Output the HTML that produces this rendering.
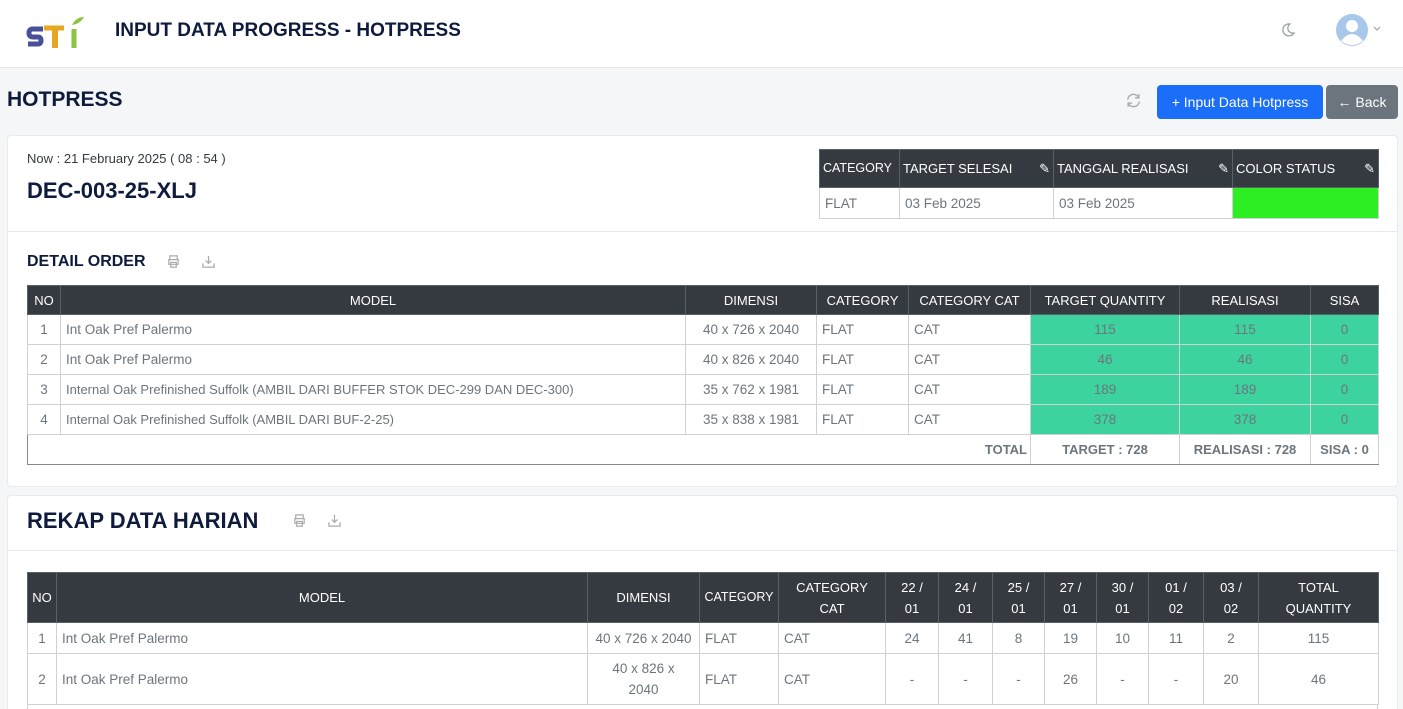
<!DOCTYPE html>
<html style="width:1403px;height:709px;overflow:hidden"><head><meta charset="utf-8">
<style>
*{box-sizing:border-box;margin:0;padding:0}
body{width:1403px;height:709px;overflow:hidden;background:#f5f6f8;font-family:"Liberation Sans",sans-serif;color:#6c757d;position:relative}
.abs{position:absolute}
.hdr{left:0;top:0;width:1403px;height:68px;background:#fff;border-bottom:1px solid #e3e5e8}
.navy{color:#0e1b3d;font-weight:bold}
.card{background:#fff;border:1px solid #e8eaed;border-radius:4px}
table{border-collapse:collapse;table-layout:fixed;position:absolute;font-size:13.5px}
th{background:#343a40;color:#fff;font-weight:normal;border:1px solid #5a6068;text-align:center;padding:0 3px;line-height:21px;font-size:13px;overflow:hidden;white-space:nowrap}
td{border:1px solid #cfd2d5;padding:0 5px;white-space:nowrap;overflow:hidden}
.c{text-align:center}
.g{background:#3dd39f}
.btn{border-radius:4px;color:#fff;font-size:14px;text-align:center;line-height:34px}
</style></head><body>
<div class="abs hdr"></div>
<svg class="abs" style="left:26px;top:14px" width="60" height="36" viewBox="0 0 60 36">
<path d="M17 15 H7 Q3 15 3 19 Q3 23 7 23 H12 Q15 23 15 26.5 Q15 30 12 30 H2" fill="none" stroke="#4a4f9a" stroke-width="5"/>
<path d="M18 14 H38" stroke="#e6a722" stroke-width="5"/><path d="M29 14 V34" stroke="#e6a722" stroke-width="6"/>
<path d="M48 15 V34" stroke="#8cc43f" stroke-width="5"/><path d="M46 11 Q50 3 58 3 Q54 10 46 11Z" fill="#8cc43f"/>
</svg>
<div class="abs navy" style="left:115px;top:20px;font-size:19px">INPUT DATA PROGRESS - HOTPRESS</div>
<svg class="abs" style="left:1280px;top:22px" width="16" height="16" viewBox="0 0 16 16"><path d="M10 2 A6 6 0 1 0 14 11 A5 5 0 0 1 10 2Z" fill="none" stroke="#9aa0a6" stroke-width="1.3"/></svg>
<svg class="abs" style="left:1335px;top:13px" width="34" height="34" viewBox="0 0 34 34"><circle cx="17" cy="17" r="16" fill="#a8c8ea"/><circle cx="17" cy="13" r="6" fill="#fff"/><path d="M6 28 Q17 14 28 28 Q17 36 6 28Z" fill="#fff"/></svg>
<svg class="abs" style="left:1373px;top:26px" width="8" height="6" viewBox="0 0 8 6"><path d="M1 1 L4 4 L7 1" fill="none" stroke="#999" stroke-width="1"/></svg>
<div class="abs navy" style="left:7px;top:88px;font-size:21px">HOTPRESS</div>
<svg class="abs" style="left:1125px;top:92px" width="17" height="17" viewBox="0 0 16 16" fill="none" stroke="#aab0b6" stroke-width="1.4"><path d="M2.5 7 A5.5 5.5 0 0 1 13 5.5 M13 2 V5.5 H9.5 M13.5 9 A5.5 5.5 0 0 1 3 10.5 M3 14 V10.5 H6.5"/></svg>
<div class="abs btn" style="left:1157px;top:85px;width:166px;background:#1a6ef7">+ Input Data Hotpress</div>
<div class="abs btn" style="left:1326px;top:85px;width:72px;background:#6c757d">&#8592; Back</div>

<div class="abs card" style="left:7px;top:135px;width:1391px;height:352px"></div>
<div class="abs" style="left:7px;top:231px;width:1391px;height:1px;background:#e8eaed"></div>
<div class="abs" style="left:27px;top:151px;font-size:13px;color:#343a40">Now : 21 February 2025 ( 08 : 54 )</div>
<div class="abs navy" style="left:27px;top:178px;font-size:22px">DEC-003-25-XLJ</div>
<table style="left:819px;top:149px;width:559px">
<colgroup><col style="width:80px"><col style="width:154px"><col style="width:179px"><col style="width:146px"></colgroup>
<tr style="height:38px"><th style="text-align:left;font-size:12.5px">CATEGORY</th><th style="text-align:left">TARGET SELESAI <span style="float:right">&#9998;</span></th><th style="text-align:left">TANGGAL REALISASI <span style="float:right">&#9998;</span></th><th style="text-align:left">COLOR STATUS <span style="float:right">&#9998;</span></th></tr>
<tr style="height:31px"><td>FLAT</td><td>03 Feb 2025</td><td>03 Feb 2025</td><td style="background:#2cee22"></td></tr>
</table>
<div class="abs navy" style="left:27px;top:253px;font-size:16px">DETAIL ORDER</div>
<svg class="abs" style="left:166px;top:254px" width="15" height="15" viewBox="0 0 16 16" fill="none" stroke="#aaa" stroke-width="1.3"><path d="M4 6 V2 H12 V6 M3 6 H13 V11 H3Z M5 9 H11 V14 H5Z"/></svg>
<svg class="abs" style="left:201px;top:254px" width="15" height="15" viewBox="0 0 16 16" fill="none" stroke="#aaa" stroke-width="1.3"><path d="M8 2 V10 M5 7 L8 10 L11 7 M2 10 V14 H14 V10"/></svg>
<table style="left:27px;top:285px;width:1351px">
<colgroup><col style="width:33px"><col style="width:625px"><col style="width:131px"><col style="width:92px"><col style="width:122px"><col style="width:149px"><col style="width:131px"><col style="width:68px"></colgroup>
<tr style="height:29px"><th>NO</th><th>MODEL</th><th>DIMENSI</th><th>CATEGORY</th><th>CATEGORY CAT</th><th>TARGET QUANTITY</th><th>REALISASI</th><th>SISA</th></tr>
<tr style="height:30px"><td class="c">1</td><td>Int Oak Pref Palermo</td><td class="c">40 x 726 x 2040</td><td>FLAT</td><td>CAT</td><td class="c g">115</td><td class="c g">115</td><td class="c g">0</td></tr>
<tr style="height:30px"><td class="c">2</td><td>Int Oak Pref Palermo</td><td class="c">40 x 826 x 2040</td><td>FLAT</td><td>CAT</td><td class="c g">46</td><td class="c g">46</td><td class="c g">0</td></tr>
<tr style="height:30px"><td class="c">3</td><td style="font-size:13px">Internal Oak Prefinished Suffolk (AMBIL DARI BUFFER STOK DEC-299 DAN DEC-300)</td><td class="c">35 x 762 x 1981</td><td>FLAT</td><td>CAT</td><td class="c g">189</td><td class="c g">189</td><td class="c g">0</td></tr>
<tr style="height:30px"><td class="c">4</td><td style="font-size:13px">Internal Oak Prefinished Suffolk (AMBIL DARI BUF-2-25)</td><td class="c">35 x 838 x 1981</td><td>FLAT</td><td>CAT</td><td class="c g">378</td><td class="c g">378</td><td class="c g">0</td></tr>
<tr style="height:30px;font-weight:bold;font-size:13px"><td colspan="5" style="text-align:right;border-left:1px solid #888;border-bottom:1px solid #888;padding-right:3px">TOTAL</td><td class="c" style="border-bottom:1px solid #888">TARGET : 728</td><td class="c" style="border-bottom:1px solid #888;padding:0 2px">REALISASI : 728</td><td class="c" style="border-bottom:1px solid #888;padding:0 2px">SISA : 0</td></tr>
</table>

<div class="abs card" style="left:7px;top:495px;width:1391px;height:220px"></div>
<div class="abs" style="left:7px;top:550px;width:1391px;height:1px;background:#e8eaed"></div>
<div class="abs navy" style="left:27px;top:508px;font-size:22px">REKAP DATA HARIAN</div>
<svg class="abs" style="left:292px;top:513px" width="15" height="15" viewBox="0 0 16 16" fill="none" stroke="#aaa" stroke-width="1.3"><path d="M4 6 V2 H12 V6 M3 6 H13 V11 H3Z M5 9 H11 V14 H5Z"/></svg>
<svg class="abs" style="left:327px;top:513px" width="15" height="15" viewBox="0 0 16 16" fill="none" stroke="#aaa" stroke-width="1.3"><path d="M8 2 V10 M5 7 L8 10 L11 7 M2 10 V14 H14 V10"/></svg>
<table style="left:27px;top:572px;width:1351px">
<colgroup><col style="width:29px"><col style="width:531px"><col style="width:112px"><col style="width:79px"><col style="width:107px"><col style="width:53px"><col style="width:54px"><col style="width:52px"><col style="width:52px"><col style="width:52px"><col style="width:55px"><col style="width:55px"><col style="width:120px"></colgroup>
<tr style="height:50px"><th>NO</th><th>MODEL</th><th>DIMENSI</th><th style="font-size:12.5px">CATEGORY</th><th>CATEGORY<br>CAT</th><th>22 /<br>01</th><th>24 /<br>01</th><th>25 /<br>01</th><th>27 /<br>01</th><th>30 /<br>01</th><th>01 /<br>02</th><th>03 /<br>02</th><th>TOTAL<br>QUANTITY</th></tr>
<tr style="height:31px"><td class="c">1</td><td>Int Oak Pref Palermo</td><td class="c" style="padding:0 2px">40 x 726 x 2040</td><td>FLAT</td><td>CAT</td><td class="c">24</td><td class="c">41</td><td class="c">8</td><td class="c">19</td><td class="c">10</td><td class="c">11</td><td class="c">2</td><td class="c">115</td></tr>
<tr style="height:51px"><td class="c">2</td><td>Int Oak Pref Palermo</td><td class="c" style="white-space:normal;line-height:21px;padding:0 14px">40 x 826 x 2040</td><td>FLAT</td><td>CAT</td><td class="c">-</td><td class="c">-</td><td class="c">-</td><td class="c">26</td><td class="c">-</td><td class="c">-</td><td class="c">20</td><td class="c">46</td></tr>
</table>
<div class="abs" style="left:27px;top:704px;width:1351px;height:5px;border-left:1px solid #cfd2d5;border-right:1px solid #cfd2d5"></div>
</body></html>
